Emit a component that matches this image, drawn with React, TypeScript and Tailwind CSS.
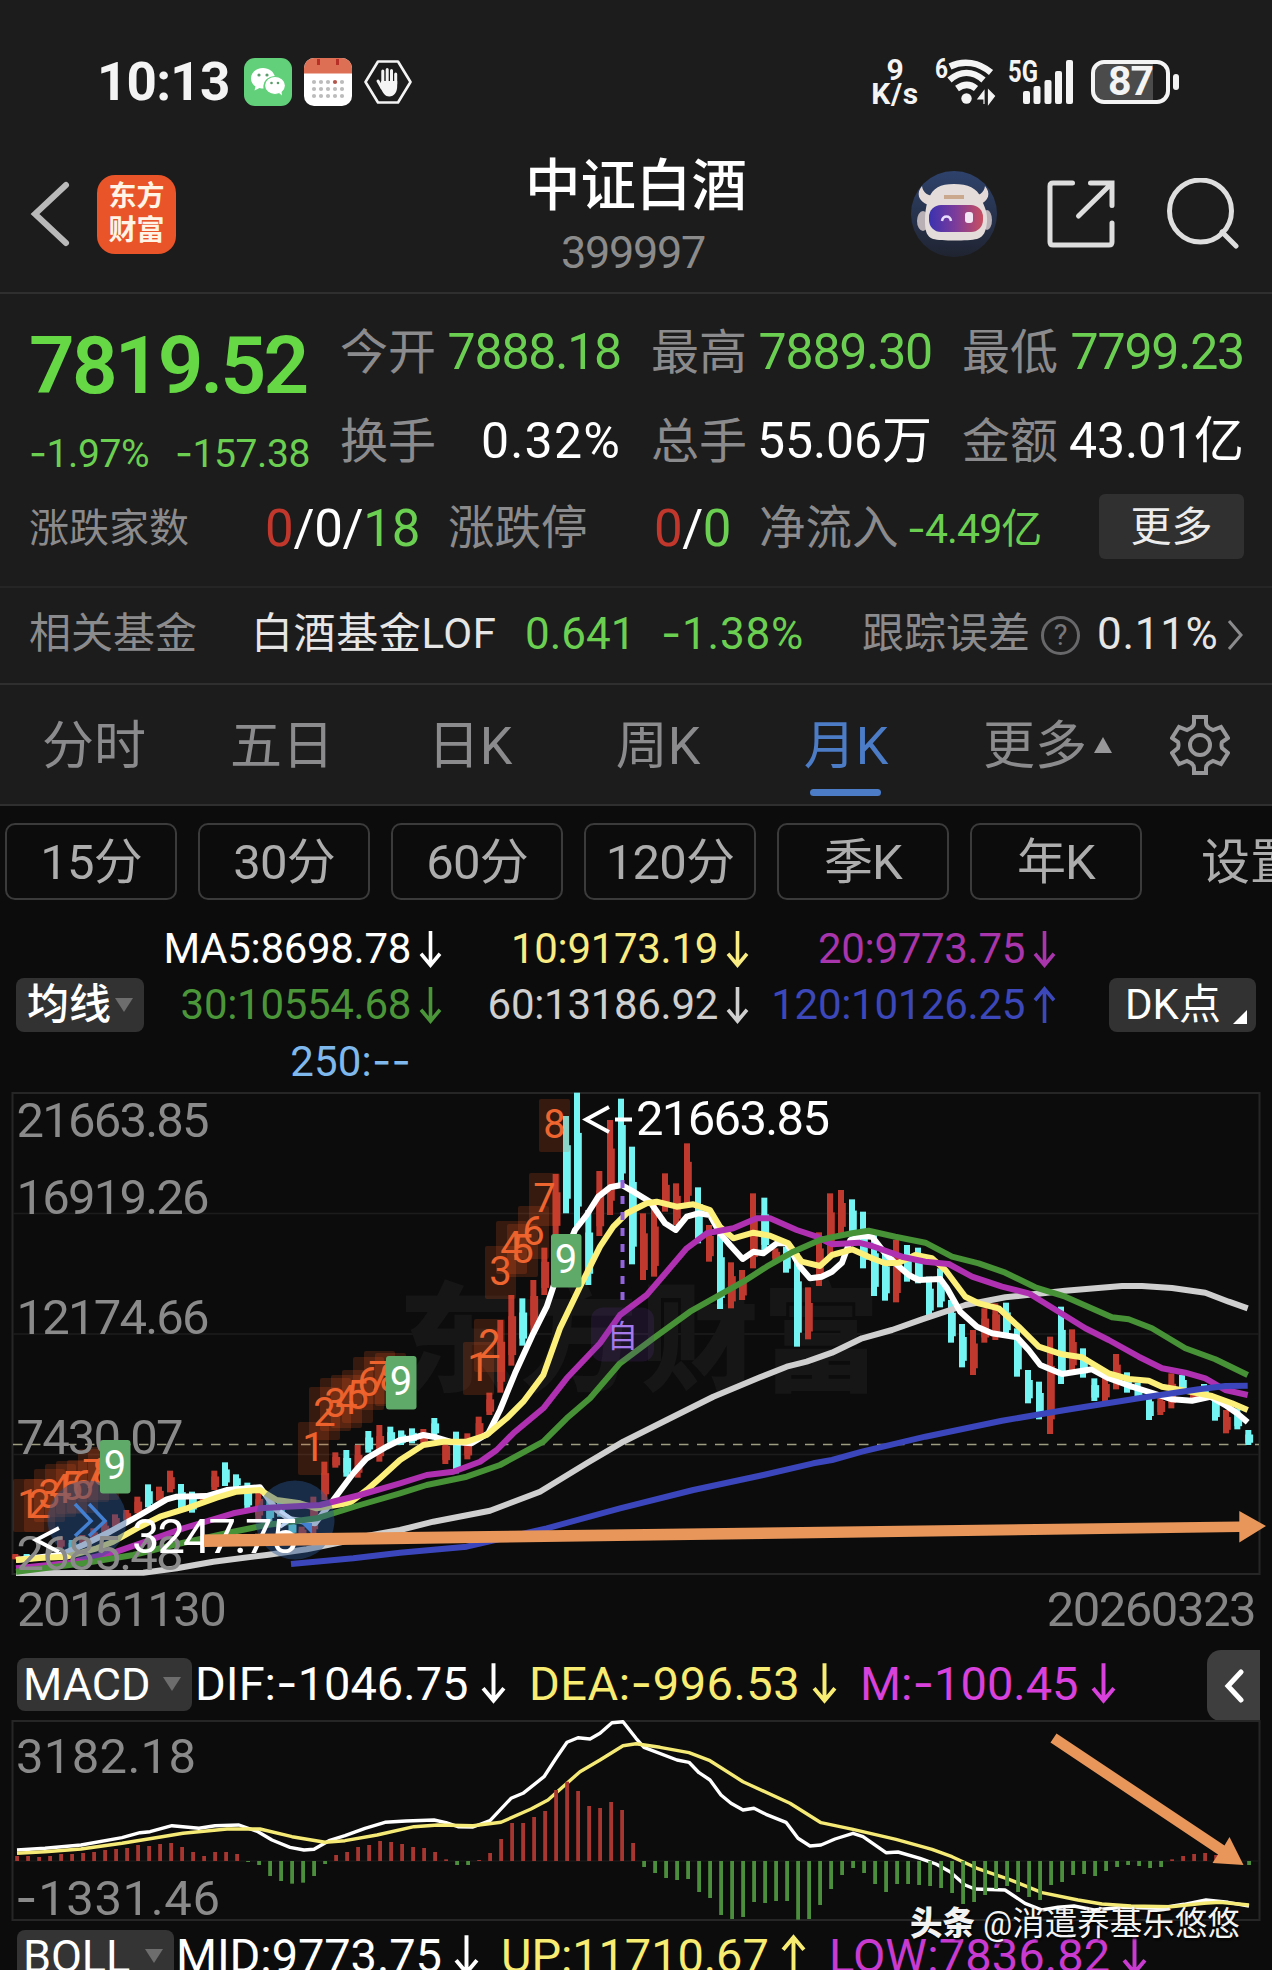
import { ReactNode } from "react";

type Point = [number, number];
type Section = { x: number; points: Point[] };
type Candle = [number, number, number, "r" | "c"];

const RED = "#c0392f";
const CYAN = "#74f4f2";

// Chart geometry is stored in thirds of a pixel, section by section
const SECTION_TOP = 1080;

const toPath = (sections: Section[]) =>
  sections
    .flatMap((s) => s.points.map(([x, y]) => `${(s.x + x / 3).toFixed(1)},${(SECTION_TOP + y / 3).toFixed(1)}`))
    .join(" ");

const movingAverages: { color: string; sections: Section[] }[] = [
  {
    color: "#cfcfcf",
    sections: [
      { x: 0, points: [[48, 1480], [430, 1478], [530, 1465], [640, 1445], [800, 1425], [920, 1408], [1030, 1385], [1100, 1368]] },
      { x: 400, points: [[0, 1350], [100, 1325], [270, 1292], [420, 1235], [560, 1150], [670, 1085], [800, 1020], [940, 950], [1080, 892], [1160, 860], [1220, 845]] },
      { x: 832, points: [[0, 818], [90, 775], [180, 750], [270, 718], [400, 675], [520, 652], [700, 632], [870, 618], [930, 618], [1020, 624], [1120, 638], [1190, 665], [1247, 685]] },
    ],
  },
  {
    color: "#ffffff",
    sections: [
      { x: 0, points: [[48, 1440], [180, 1425], [250, 1395], [330, 1355], [420, 1305], [500, 1258], [530, 1250], [620, 1248], [680, 1230], [780, 1222], [830, 1290], [870, 1318], [945, 1330], [1000, 1260], [1060, 1180], [1100, 1135], [1160, 1100]] },
      { x: 400, points: [[0, 1080], [35, 1075], [70, 1065], [100, 1070], [150, 1085], [215, 1090], [265, 1060], [300, 990], [345, 880], [400, 760], [440, 680], [480, 560], [525, 450], [560, 405], [595, 350], [630, 322], [665, 315], [700, 335], [750, 365], [795, 430], [827, 450], [860, 410], [895, 400], [930, 405], [960, 460], [990, 495], [1028, 537], [1060, 515], [1090, 520], [1130, 490], [1160, 490], [1200, 560], [1230, 595], [1265, 590]] },
      { x: 832, points: [[0, 575], [30, 548], [55, 480], [90, 468], [120, 470], [155, 515], [190, 550], [230, 585], [260, 600], [325, 597], [345, 625], [385, 695], [435, 740], [480, 760], [555, 772], [590, 810], [625, 855], [690, 882], [780, 868], [830, 895], [900, 920], [980, 945], [1020, 958], [1080, 962], [1135, 950], [1180, 975], [1215, 1000], [1247, 1027]] },
    ],
  },
  {
    color: "#fdf07a",
    sections: [
      { x: 0, points: [[48, 1440], [120, 1434], [200, 1430], [290, 1405], [340, 1385], [420, 1340], [480, 1310], [560, 1285], [650, 1253], [710, 1235], [780, 1230], [830, 1260], [900, 1270], [950, 1285], [1050, 1268], [1100, 1230], [1140, 1195]] },
      { x: 400, points: [[0, 1140], [70, 1095], [130, 1085], [200, 1085], [260, 1065], [320, 1015], [370, 965], [430, 885], [480, 745], [540, 620], [600, 500], [640, 440], [680, 400], [740, 370], [770, 365], [830, 380], [880, 373], [930, 390], [960, 440], [1000, 475], [1060, 458], [1110, 467], [1165, 490], [1205, 545], [1260, 558]] },
      { x: 832, points: [[0, 525], [60, 508], [120, 535], [160, 550], [200, 548], [250, 525], [300, 535], [340, 570], [400, 650], [440, 670], [500, 685], [560, 740], [620, 800], [690, 823], [750, 832], [830, 880], [890, 897], [950, 902], [990, 920], [1060, 932], [1140, 948], [1200, 970], [1247, 990]] },
    ],
  },
  {
    color: "#b030b2",
    sections: [
      { x: 0, points: [[48, 1465], [200, 1450], [350, 1415], [450, 1380], [550, 1345], [700, 1300], [780, 1285], [860, 1280], [960, 1275], [1080, 1245]] },
      { x: 400, points: [[0, 1210], [80, 1185], [160, 1175], [240, 1145], [290, 1110], [340, 1060], [430, 985], [500, 895], [600, 790], [660, 705], [740, 645], [800, 575], [860, 505], [920, 460], [1000, 445], [1070, 415], [1110, 415], [1190, 450], [1250, 470]] },
      { x: 832, points: [[0, 493], [80, 488], [120, 498], [210, 530], [280, 545], [350, 552], [420, 590], [510, 620], [590, 640], [680, 695], [760, 745], [830, 780], [920, 830], [990, 865], [1060, 878], [1120, 895], [1180, 930], [1247, 945]] },
    ],
  },
  {
    color: "#479136",
    sections: [
      { x: 0, points: [[48, 1475], [250, 1450], [400, 1425], [520, 1395], [700, 1355], [800, 1335], [950, 1315], [1080, 1275]] },
      { x: 400, points: [[0, 1240], [80, 1215], [200, 1190], [300, 1155], [430, 1085], [500, 1015], [570, 955], [660, 850], [760, 775], [870, 695], [950, 650], [1030, 605], [1100, 560], [1180, 515], [1260, 480]] },
      { x: 832, points: [[0, 472], [60, 460], [110, 452], [190, 470], [280, 488], [360, 530], [440, 550], [520, 578], [610, 622], [700, 650], [840, 712], [890, 718], [960, 745], [1060, 805], [1150, 838], [1247, 885]] },
    ],
  },
  {
    color: "#3b46bd",
    sections: [
      { x: 0, points: [[873, 1452], [1060, 1435]] },
      { x: 400, points: [[0, 1418], [200, 1400], [440, 1345], [660, 1285], [880, 1230], [1090, 1185], [1240, 1150]] },
      { x: 832, points: [[0, 1140], [90, 1115], [280, 1070], [510, 1022], [700, 990], [920, 955], [1100, 928], [1180, 918], [1247, 917]] },
    ],
  },
];

const candles: { x: number; items: Candle[] }[] = [
  {
    x: 0,
    items: [
      [46, 1422, 1438, "r"], [80, 1422, 1434, "c"], [180, 1370, 1405, "r"], [215, 1380, 1410, "c"], [247, 1365, 1400, "r"], [280, 1345, 1385, "r"],
      [313, 1325, 1365, "r"], [345, 1303, 1340, "r"], [379, 1290, 1322, "r"], [412, 1250, 1300, "r"], [444, 1213, 1282, "c"], [477, 1220, 1262, "r"],
      [510, 1172, 1237, "r"], [543, 1212, 1293, "c"], [576, 1235, 1298, "c"], [609, 1240, 1262, "r"], [643, 1172, 1230, "r"], [675, 1147, 1218, "c"],
      [708, 1183, 1222, "c"], [742, 1208, 1288, "c"], [775, 1230, 1320, "r"], [808, 1250, 1325, "c"], [840, 1265, 1310, "c"], [875, 1320, 1365, "c"],
      [905, 1340, 1370, "r"], [940, 1250, 1365, "r"], [973, 1145, 1260, "r"], [1006, 1117, 1163, "r"], [1039, 1110, 1190, "c"], [1073, 1095, 1193, "r"],
      [1105, 1053, 1118, "c"], [1138, 1035, 1145, "r"], [1171, 1040, 1095, "c"], [1204, 1052, 1092, "c"],
    ],
  },
  {
    x: 400,
    items: [
      [3, 1052, 1095, "c"], [36, 1045, 1090, "c"], [70, 1047, 1090, "r"], [103, 1014, 1068, "c"], [136, 1075, 1152, "r"], [168, 1055, 1180, "c"],
      [202, 1060, 1138, "r"], [236, 1010, 1075, "r"], [268, 938, 1005, "r"], [301, 720, 938, "r"], [334, 645, 857, "r"], [367, 655, 797, "c"],
      [400, 600, 760, "r"], [433, 503, 645, "r"], [467, 282, 465, "r"], [498, 108, 400, "c"], [531, 38, 440, "c"], [565, 390, 615, "c"],
      [598, 273, 468, "r"], [630, 120, 405, "r"], [663, 56, 320, "c"], [696, 200, 553, "c"], [729, 400, 600, "r"], [762, 375, 590, "r"],
      [795, 280, 395, "r"], [828, 310, 435, "r"], [861, 190, 375, "r"], [894, 322, 490, "c"], [927, 435, 545, "r"], [960, 465, 687, "c"],
      [993, 547, 685, "r"], [1026, 570, 660, "r"], [1059, 340, 565, "r"], [1093, 353, 520, "c"], [1126, 505, 540, "r"], [1158, 500, 578, "c"],
      [1191, 520, 800, "c"], [1224, 622, 778, "r"], [1257, 457, 618, "r"], [1290, 340, 530, "r"],
    ],
  },
  {
    x: 832,
    items: [
      [27, 330, 460, "r"], [60, 358, 470, "c"], [93, 395, 565, "c"], [126, 465, 648, "c"], [159, 515, 662, "c"], [192, 480, 667, "r"],
      [225, 495, 605, "c"], [258, 503, 610, "c"], [291, 590, 710, "c"], [324, 565, 682, "c"], [357, 660, 788, "c"], [390, 732, 862, "c"],
      [423, 750, 885, "r"], [457, 685, 788, "r"], [490, 670, 780, "r"], [522, 668, 765, "c"], [555, 745, 890, "c"], [588, 870, 970, "c"],
      [621, 905, 1018, "c"], [654, 770, 1062, "r"], [687, 680, 912, "c"], [720, 748, 875, "r"], [753, 805, 893, "c"], [787, 895, 963, "c"],
      [819, 890, 963, "r"], [852, 822, 928, "r"], [885, 877, 938, "c"], [917, 908, 955, "c"], [951, 940, 1020, "c"], [985, 945, 1005, "r"],
      [1018, 880, 985, "r"], [1050, 885, 935, "c"], [1083, 930, 968, "r"], [1116, 912, 960, "c"], [1149, 950, 1022, "c"], [1182, 990, 1060, "r"],
      [1216, 985, 1048, "c"], [1249, 1050, 1095, "c"],
    ],
  },
];

// [digit, left, top] of the TD sequence markers
const tdMarks: [string, number, number][] = [
  ["1", 13, 1479], ["2", 24, 1479], ["3", 34, 1469], ["4", 45, 1464], ["5", 56, 1461], ["6", 67, 1460], ["7", 78, 1449], ["8", 88, 1447],
  ["1", 298, 1422], ["2", 309, 1387], ["3", 320, 1378], ["4", 331, 1375], ["5", 342, 1370], ["6", 353, 1357], ["7", 364, 1351], ["8", 375, 1353],
  ["1", 463, 1342], ["2", 474, 1319], ["3", 485, 1246], ["4", 496, 1221], ["5", 507, 1224], ["6", 518, 1206], ["7", 529, 1173], ["8", 539, 1099],
];

const tdNines: [number, number][] = [[100, 1440], [386, 1356], [551, 1234]];

const priceLabels: [string, number, number][] = [
  ["21663.85", 1137, 193],
  ["16919.26", 1213.5, 193],
  ["12174.66", 1333.5, 193],
  ["7430.07", 1454, 167],
  ["2685.48", 1570, 167],
];

// MACD histogram, thirds of a pixel around the zero line at 873
const macdBars = [
  858, 858, 861, 858, 852, 852, 849, 846, 840, 837, 834, 825, 828, 822, 819, 831, 846, 858, 846, 846, 852, 876, 885, 918, 933, 941, 938, 918,
  882, 855, 846, 831, 825, 813, 816, 822, 831, 834, 846, 868, 885, 885, 870, 849, 807, 759, 759, 741, 723, 660, 635, 663, 708, 714, 696, 720,
  819, 891, 909, 924, 930, 927, 966, 984, 1035, 1047, 1041, 996, 999, 993, 993, 1049, 1047, 1005, 957, 915, 894, 909, 942, 966, 942, 942, 945,
  948, 954, 969, 1002, 996, 975, 957, 948, 966, 981, 990, 945, 936, 915, 912, 918, 903, 891, 885, 888, 894, 891, 868, 858, 852, 849, 855, 860,
  868, 885,
];

const difLine: Point[] = [
  [17, 840], [45, 835], [81, 825], [122, 803], [140, 788], [150, 785], [172, 767], [199, 775], [215, 767], [239, 765], [258, 785], [272, 810],
  [290, 832], [304, 840], [314, 838], [329, 812], [345, 797], [365, 775], [385, 757], [406, 753], [434, 750], [446, 758], [458, 770], [473, 771],
  [490, 752], [511, 685], [523, 670], [544, 620], [556, 565], [567, 517], [578, 503], [590, 507], [600, 490], [612, 458], [623, 455], [636, 505],
  [644, 532], [677, 570], [689, 577], [699, 608], [710, 630], [721, 675], [731, 700], [743, 720], [754, 715], [766, 733], [786, 757], [798, 805],
  [810, 828], [821, 825], [835, 807], [853, 790], [863, 800], [886, 848], [898, 846], [920, 865], [936, 882], [950, 905], [965, 945], [975, 957],
  [1005, 960], [1025, 1000], [1042, 1020], [1058, 1012], [1074, 1008], [1094, 1020], [1123, 1012], [1159, 1015], [1184, 1003], [1206, 990],
  [1228, 997], [1249, 1008],
];

const deaLine: Point[] = [
  [17, 850], [45, 845], [81, 837], [122, 820], [162, 800], [183, 790], [227, 777], [260, 777], [292, 800], [325, 817], [345, 812], [377, 795],
  [414, 770], [438, 765], [473, 767], [501, 757], [531, 717], [548, 690], [580, 605], [600, 570], [623, 527], [636, 521], [660, 532], [689, 548],
  [710, 572], [743, 635], [790, 700], [821, 758], [853, 778], [896, 808], [932, 838], [952, 860], [977, 895], [1009, 928], [1042, 968],
  [1078, 990], [1102, 1002], [1131, 1008], [1171, 1010], [1204, 1000], [1220, 997], [1249, 1005],
];

const macdPath = (points: Point[]) => points.map(([x, y]) => `${x},${(1570 + y / 3).toFixed(1)}`).join(" ");

// Roboto's hyphen is too short for a minus sign, so it is set in Inter
function Num({ children }: { children: string }) {
  return (
    <span>
      {children.split(/(-)/).map((part, i) => (part === "-" ? <span key={i} className="[font-family:Inter,sans-serif]">-</span> : part))}
    </span>
  );
}

function Arrow({ up = false, tall = false }: { up?: boolean; tall?: boolean }) {
  return (
    <svg
      viewBox="0 0 24 40"
      className={tall ? "ml-3 h-[42px] w-[25px]" : "ml-2 h-[38px] w-[23px]"}
      fill="none"
      stroke="currentColor"
      strokeWidth="3.8"
    >
      <path d={up ? "M12 39V3M2 15L12 3l10 12" : "M12 1v36M2 25l10 12 10-12"} />
    </svg>
  );
}

function StatusBar() {
  return (
    <div className="flex h-[120px] items-center justify-between pt-[43px] pr-[93px] pl-[97px] text-[#f4f4f4]">
      <div className="flex items-center">
        <span className="w-[147px] pt-[2px] text-[53px] leading-none font-bold tracking-[-0.8px]">10:13</span>
        <svg viewBox="0 0 48 48" className="h-12 w-12">
          <rect width="48" height="48" rx="11" fill="#62d07a" />
          <path d="M19 10c-7 0-12 4.700-12 10.500 0 3.400 1.700 6 4.500 8l-1 4 5-2.400c1.400.4 2.500.5 4 .5A10 10 0 0 1 31 19C30 13.800 25 10 19 10z" fill="#fff" />
          <ellipse cx="31" cy="27.500" rx="10.500" ry="9" fill="#fff" stroke="#62d07a" strokeWidth="1.200" />
          <path d="M35 35l3 2.500-.6-5z" fill="#fff" />
          <g fill="#5a9c6a">
            <circle cx="15" cy="17" r="1.600" />
            <circle cx="23" cy="17" r="1.600" />
            <circle cx="27.500" cy="25" r="1.300" />
            <circle cx="34" cy="25" r="1.300" />
          </g>
        </svg>
        <svg viewBox="0 0 48 48" className="ml-3 h-12 w-12">
          <rect width="48" height="48" rx="10" fill="#fff" />
          <path d="M0 15.500V10A10 10 0 0 1 10 0h28a10 10 0 0 1 10 10v5.500z" fill="#dd6f55" />
          <path d="M14.500 1v6M33.500 1v6" stroke="#b82f28" strokeWidth="3" />
          {[24, 31, 38].map((y) =>
            [10, 17, 24, 31, 38].map((x) => (
              <circle key={`${x}-${y}`} cx={x} cy={y} r="2.100" fill={x === 31 && y === 24 ? "#b4564a" : "#bcbcbc"} />
            ))
          )}
        </svg>
        <svg viewBox="0 0 48 48" className="ml-3 h-12 w-12">
          <path d="M14 3.500h20L46.500 24 34 44.500H14L1.500 24z" fill="none" stroke="currentColor" strokeWidth="2.600" strokeLinejoin="round" />
          <g stroke="currentColor" strokeWidth="3" strokeLinecap="round">
            <path d="M18.800 13v12M23.200 11.500v12M27.500 12.500v12M31.700 16v10M14 23l4 7" />
          </g>
          <path d="M17.300 23h15.900v5c0 6-3 10.500-8 10.500-4 0-6-3-8.900-9z" fill="currentColor" />
        </svg>
      </div>

      <div className="flex items-center">
        <div className="flex w-[50px] flex-col items-center text-[30px] leading-[24px] font-bold">
          <span>9</span>
          <span className="tracking-[0.6px]">K/s</span>
        </div>
        <svg viewBox="0 0 64 50" className="ml-[15px] h-[50px] w-16 overflow-visible">
          <text x="0" y="21" fontSize="27" fontWeight="700" fill="currentColor" textLength="13" lengthAdjust="spacingAndGlyphs">6</text>
          <g fill="none" stroke="currentColor" strokeWidth="6.500">
            <path d="M15 9.500c14-7 29-4 41 6" />
            <path d="M14.500 23c11-9.500 23-9.500 34 0" />
            <path d="M22 31.500c7-5 13-5 19 0" />
          </g>
          <circle cx="31.500" cy="41.500" r="5.200" fill="currentColor" />
          <path d="M49 47V34l-6 8h6zM53.500 33v14l6-8z" fill="currentColor" stroke="currentColor" strokeWidth="1.200" />
        </svg>
        <svg viewBox="0 0 68 50" className="ml-2 h-[50px] w-[68px] overflow-visible" fill="currentColor">
          <text x="1" y="25" fontSize="31" fontWeight="700" textLength="30" lengthAdjust="spacingAndGlyphs">5G</text>
          <rect x="16" y="34" width="7" height="13" rx="2" />
          <rect x="26.500" y="29" width="7" height="18" rx="2" />
          <rect x="37.500" y="23" width="7" height="24" rx="2" />
          <rect x="48" y="14" width="7" height="33" rx="2" />
          <rect x="59" y="3" width="7" height="44" rx="2" />
        </svg>
        <div className="ml-4 flex h-11 w-[79px] items-center justify-center rounded-[13px] border-4 border-current bg-linear-to-r from-[#4b4b4b] from-82% to-[#1c1c1c] to-82% text-[41px] leading-none font-bold tracking-[-1px]">
          87
        </div>
        <div className="ml-[3px] h-4 w-1.5 rounded-sm bg-current" />
      </div>
    </div>
  );
}

function Header() {
  return (
    <header className="grid h-[174px] grid-cols-[400px_1fr_400px] items-center border-b-2 border-[#2f2f2f] pt-[16px]">
      <div className="flex items-center pl-[30px]">
        <svg viewBox="0 0 42 68" className="h-[68px] w-[42px]" fill="none" stroke="#b9b9b9" strokeWidth="6" strokeLinecap="round">
          <path d="M36 5L5 34l31 29" />
        </svg>
        <div className="ml-[25px] flex h-[79px] w-[79px] flex-col items-center justify-center rounded-[18px] bg-[#e95428] text-[28px] leading-[34px] font-bold text-[#fff4e6]">
          <span>东方</span>
          <span>财富</span>
        </div>
      </div>
      <div className="flex flex-col items-center pt-[12px]">
        <h1 className="text-[55.5px] leading-[66px] font-medium text-white">中证白酒</h1>
        <span className="pr-[6px] text-[45px] leading-[66px] tracking-[-1.3px] text-[#8b8b8b]">399997</span>
      </div>
      <div className="flex items-center pl-[38px]">
        <svg viewBox="0 0 88 88" className="h-[88px] w-[88px]">
          <defs>
            <linearGradient id="visor" x1="0" x2="1">
              <stop offset="0" stopColor="#3a32b0" />
              <stop offset=".5" stopColor="#7d3c9a" />
              <stop offset="1" stopColor="#c84f60" />
            </linearGradient>
            <linearGradient id="disc" x1="0" x2="0" y1="0" y2="1">
              <stop offset="0" stopColor="#2e426b" />
              <stop offset="1" stopColor="#202431" />
            </linearGradient>
          </defs>
          <circle cx="44" cy="44" r="43" fill="url(#disc)" />
          <path d="M12 16c-6 7-4 15 6 19l8-9c-8 0-13-3-14-10zM75 16c6 7 4 15-6 19l-8-9c8 0 13-3 14-10z" fill="#e4d9d6" />
          <ellipse cx="13" cy="51" rx="6" ry="10" fill="#b9b0b5" />
          <ellipse cx="77" cy="50" rx="5" ry="10" fill="#b9b0b5" />
          <path d="M44 14c14 0 23 4 27 14 3 8 7 14 6 24-1 9-3 15-10 17-9 2-36 2-44 0-6-2-8-8-8-17 0-10 1-17 4-24 4-10 11-14 25-14z" fill="#e3dcda" />
          <path d="M34 27h20" stroke="#c9a88e" strokeWidth="4" />
          <rect x="19" y="35" width="54" height="27" rx="12" fill="url(#visor)" />
          <path d="M32 51c1-6 8-6 9 0" fill="none" stroke="#e8dcff" strokeWidth="2.500" />
          <rect x="55" y="42" width="8" height="11" rx="3" fill="#f2e6f5" />
        </svg>
        <svg viewBox="0 0 68 68" className="ml-[49px] h-[68px] w-[68px]" fill="none" stroke="#dedede" strokeWidth="5" strokeLinecap="round">
          <path d="M25.500 3H6Q3 3 3 6v56q0 3 3 3h56q3 0 3-3V43M43.500 3H65v22.500M64 4L31.500 36" />
        </svg>
        <svg viewBox="0 0 72 72" className="ml-[52px] h-[72px] w-[72px]" fill="none" stroke="#dedede" strokeWidth="5" strokeLinecap="round">
          <circle cx="33.500" cy="33" r="31" />
          <path d="M55 54l14 14" />
        </svg>
      </div>
    </header>
  );
}

function Quote({ label, value, className }: { label: string; value: string; className: string }) {
  return (
    <div className="flex items-center justify-between">
      <span className="-ml-px text-[48px] text-[#8b8b8d]">{label}</span>
      <span className={`text-[50px] ${className}`}>{value}</span>
    </div>
  );
}

function QuotePanel() {
  const green = "text-[#6bd052] tracking-[-1.2px]";
  const white = "text-white tracking-[-0.1px]";
  return (
    <section className="border-b-2 border-[#252526] pt-[14px] pb-[14px] whitespace-nowrap">
      <div className="flex">
        <div className="w-[341px] pl-[29px]">
          <div className="h-[115px] pt-px text-[80px] leading-[115px] font-semibold tracking-[-2.8px] text-[#66d745]">7819.52</div>
          <div className="flex h-[62px] items-center justify-between pr-[31px] text-[39px] tracking-[-0.4px] text-[#6bd052]">
            <Num>-1.97%</Num>
            <Num>-157.38</Num>
          </div>
        </div>
        <div className="grid auto-rows-[89px] grid-cols-[280px_280px_281px] gap-x-[31px]">
          <Quote label="今开" value="7888.18" className={green} />
          <Quote label="最高" value="7889.30" className={green} />
          <Quote label="最低" value="7799.23" className={green} />
          <Quote label="换手" value="0.32%" className="text-white tracking-[1.2px]" />
          <Quote label="总手" value="55.06万" className={white} />
          <Quote label="金额" value="43.01亿" className={white} />
        </div>
      </div>
      <div className="flex h-[86px] items-center pl-[29px] text-[47px] text-[#8b8b8d]">
        <div className="flex w-[391px] items-center justify-between">
          <span className="text-[40px]">涨跌家数</span>
          <span className="text-[51px] tracking-[-0.3px] text-white">
            <span className="text-[#c2372c]">0</span>/0/<span className="text-[#6bd052]">18</span>
          </span>
        </div>
        <div className="ml-[28px] flex w-[283px] items-center justify-between">
          <span className="text-[46.5px]">涨跌停</span>
          <span className="text-[51px] tracking-[-0.5px] text-white">
            <span className="text-[#c2372c]">0</span>/<span className="text-[#6bd052]">0</span>
          </span>
        </div>
        <span className="ml-[28px] w-[148px] text-[46.5px]">净流入</span>
        <span className="w-[192px] text-[41px] tracking-[-0.9px] text-[#6bd052]"><Num>-4.49亿</Num></span>
        <button className="mb-[5px] h-[65px] w-[145px] rounded-md bg-[#303030] text-[41px] leading-[62px] text-[#ececec]">更多</button>
      </div>
    </section>
  );
}

function FundRow() {
  return (
    <section className="flex h-[97px] items-center border-b-2 border-[#2f2f2f] pb-[4px] pl-[29px] text-[42px] whitespace-nowrap text-[#8b8b8d]">
      <span className="w-[222px]">相关基金</span>
      <span className="w-[274px] tracking-[0.6px] text-[#e6e6e6]">白酒基金LOF</span>
      <span className="w-[136px] text-[44px] text-[#6bd052]">0.641</span>
      <span className="w-[201px] text-[44px] tracking-[0.8px] text-[#6bd052]"><Num>-1.38%</Num></span>
      <span className="w-[179px]">跟踪误差</span>
      <span className="mt-[3px] flex h-[39px] w-[39px] items-center justify-center rounded-full border-[3px] border-[#68686a] text-[29px] leading-none text-[#77777a]">?</span>
      <span className="ml-[17px] w-[130px] text-[44px] tracking-[0.7px] text-[#e6e6e6]">0.11%</span>
      <svg viewBox="0 0 16 30" className="mt-[3px] h-[30px] w-4" fill="none" stroke="#8b8b8d" strokeWidth="3">
        <path d="M2 1l12 14L2 29" />
      </svg>
    </section>
  );
}

function Tabs() {
  return (
    <nav className="flex h-[121px] items-center border-b-2 border-[#2f2f2f] text-[52px] leading-none whitespace-nowrap text-[#8b8b8d]">
      {["分时", "五日", "日K", "周K"].map((tab) => (
        <span key={tab} className="w-[188px] pt-[4px] text-center">{tab}</span>
      ))}
      <span className="relative w-[188px] pt-[4px] text-center text-[#4c7cc6]">
        月K
        <span className="absolute -bottom-[23px] left-[58px] h-[7px] w-[71px] rounded-full bg-[#4c7cc6]" />
      </span>
      <span className="flex w-[188px] items-center justify-center gap-1.5 pt-[4px] pl-7">
        更多
        <svg viewBox="0 0 20 16" className="mb-1 h-4 w-5" fill="#98989a">
          <path d="M10 0l9 16H1z" />
        </svg>
      </span>
      <svg viewBox="0 0 60 60" className="ml-[42px] h-[60px] w-[60px]" fill="none" stroke="#98989a" strokeWidth="4">
        <path d="M24 2h12v6q0 3 3 5l4 2 8-3 7 11-6 4q-1 3 0 6l6 5-7 11-8-3-4 2q-3 2-3 5v5H24v-5q0-3-3-5l-4-2-8 3L2 38l6-5q1-3 0-6l-6-4L9 12l8 3 4-2q3-2 3-5z" />
        <circle cx="30" cy="30" r="10" />
      </svg>
    </nav>
  );
}

function PeriodChips() {
  return (
    <div className="flex h-[113px] gap-[21px] overflow-hidden pt-[17px] pl-[5px] text-[49px] leading-[75px] whitespace-nowrap text-[#adadad]">
      {["15分", "30分", "60分", "120分", "季K", "年K"].map((chip) => (
        <span key={chip} className="h-[77px] w-[172px] shrink-0 rounded-[10px] border-2 border-[#3b3b3b] text-center tracking-[-0.8px]">
          {chip}
        </span>
      ))}
      <span className="shrink-0 pt-[2px] pl-[38px]">设置</span>
    </div>
  );
}

function MaCell({ color, children }: { color: string; children: ReactNode }) {
  return <div className={`flex items-center justify-end ${color}`}>{children}</div>;
}

function MaLegend() {
  return (
    <div className="flex h-[171px] items-center pl-4 text-[42px] leading-none whitespace-nowrap">
      <button className="flex h-[54px] w-32 items-center rounded-lg bg-[#323232] pl-[11px] text-[42px] font-medium text-white">
        均线
        <svg viewBox="0 0 18 14" className="ml-1 h-3.5 w-[18px]" fill="#6d6d6d">
          <path d="M0 0h18l-9 14z" />
        </svg>
      </button>
      <div className="grid auto-rows-[56.5px] grid-cols-[298px_307px_307px] pt-[1px] tracking-[-0.3px]">
        <MaCell color="text-white">MA5:8698.78<Arrow /></MaCell>
        <MaCell color="text-[#f9ec83]">10:9173.19<Arrow /></MaCell>
        <MaCell color="text-[#a935ad]">20:9773.75<Arrow /></MaCell>
        <MaCell color="text-[#4b9639]">30:10554.68<Arrow /></MaCell>
        <MaCell color="text-[#cfcfcf]">60:13186.92<Arrow /></MaCell>
        <MaCell color="text-[#3c48ba]">120:10126.25<Arrow up /></MaCell>
        <MaCell color="text-[#7fb8ec] pr-[31px] tracking-[0.2px]"><Num>250:--</Num></MaCell>
      </div>
      <button className="ml-[53px] flex h-[54px] w-[147px] items-end rounded-lg bg-[#323232] pl-[16px] text-[42px] leading-[54px] text-white">
        DK点
        <svg viewBox="0 0 14 14" className="mb-2 ml-3 h-3.5 w-3.5" fill="#fff">
          <path d="M14 0v14H0z" />
        </svg>
      </button>
    </div>
  );
}

function PriceChart() {
  return (
    <svg viewBox="0 1090 1272 486" className="block h-[486px] w-full">
      <rect x="12.500" y="1093" width="1247" height="481" fill="none" stroke="#262626" strokeWidth="2" />
      <path d="M13 1213.500h1246M13 1334h1246M13 1454.500h1246" stroke="#1c1c1c" strokeWidth="1.500" />
      <text x="398" y="1382" fontSize="118" fontWeight="900" fill="#161616" textLength="482">东方财富</text>
      <path d="M13 1444.500h1246" stroke="#9b9c80" strokeWidth="1.300" strokeDasharray="9.500 8.500" />

      {candles.map((section) =>
        section.items.map(([x, top, bottom, tone]) => {
          const left = section.x + x / 3 - 3;
          const y = SECTION_TOP + top / 3;
          const height = (bottom - top) / 3;
          return (
            <g key={left} fill={tone === "r" ? RED : CYAN}>
              <rect x={left} y={y} width="6" height={height} />
              <rect x={left} y={y + height * 0.3} width="7.800" height={height * 0.55} />
            </g>
          );
        })
      )}

      {tdMarks.map(([digit, x, y]) => (
        <g key={`${x}-${y}`}>
          <rect x={x} y={y} width="31" height="53" rx="2" fill="#e2571c" opacity=".2" />
          <text x={x + 15.500} y={y + 39} fontSize="40" textAnchor="middle" fill="#ef6530">{digit}</text>
        </g>
      ))}

      {movingAverages.map((ma) => (
        <polyline key={ma.color} points={toPath(ma.sections)} fill="none" stroke={ma.color} strokeWidth="6" strokeLinejoin="round" />
      ))}

      <circle cx="87" cy="1520" r="39.500" fill="#2a5590" opacity=".45" />
      <circle cx="295" cy="1520" r="39.500" fill="#2a5590" opacity=".45" />
      <g fill="none" stroke="#4380d2" strokeWidth="3.500">
        <path d="M75 1504l16 17-16 15M89 1504l16 17-16 15" />
      </g>
      <path d="M280 1511l12 8-12 8" fill="none" stroke="#bcd2f2" strokeWidth="3.500" />
      <path d="M301 1523h11v11z" fill="#4380d2" />

      <g fill="#8a8a8a" fontSize="49">
        {priceLabels.map(([label, y, width]) => (
          <text key={label} x="16.500" y={y} textLength={width}>{label}</text>
        ))}
      </g>

      {tdNines.map(([x, y]) => (
        <g key={x}>
          <rect x={x} y={y} width="30.500" height="53.500" rx="3" fill="#5faa69" />
          <text x={x + 15} y={y + 39} fontSize="40" textAnchor="middle" fill="#fff">9</text>
        </g>
      ))}

      <path d="M622.500 1180v120" stroke="#9263dc" strokeWidth="4" strokeDasharray="8 8" />
      <rect x="591" y="1307.500" width="63" height="54" rx="12" fill="#6a31a0" opacity=".18" />
      <text x="607" y="1347" fontSize="31" fill="#a679ea">自</text>

      <g fill="none" stroke="#fff" strokeWidth="3.800">
        <path d="M609 1107l-23 12.500 23 12.500M615 1119.500h17" />
        <path d="M59 1528l-23 12 23 12" />
      </g>
      <g fill="#fff" fontSize="49">
        <text x="636" y="1135" textLength="194">21663.85</text>
        <text x="132" y="1553" textLength="166">3247.75</text>
      </g>

      <path d="M204 1534.500L1239.300 1521.500V1511L1266 1526l-26.700 16.500V1532L204 1547z" fill="#e8965a" />
    </svg>
  );
}

function IndicatorButton({ name, width }: { name: string; width: string }) {
  return (
    <button className={`mt-0.5 flex h-[53px] items-center justify-between rounded-lg bg-[#343434] pr-[11px] pl-[6px] text-[45px] leading-none text-white ${width}`}>
      {name}
      <svg viewBox="0 0 18 14" className="h-3.5 w-[18px]" fill="#6d6d6d">
        <path d="M0 0h18l-9 14z" />
      </svg>
    </button>
  );
}

function MacdChart() {
  return (
    <svg viewBox="0 1720 1272 202" className="block h-[202px] w-full">
      <rect x="12.500" y="1721" width="1247" height="199" fill="none" stroke="#262626" strokeWidth="2" />
      <path d="M13 1861h1246" stroke="#1c1c1c" strokeWidth="1" />
      <g fill="#8a8a8a" fontSize="49">
        <text x="16" y="1773" textLength="180">3182.18</text>
        <text x="15" y="1915" textLength="205">
          <tspan fontFamily="Inter">-</tspan>1331.46
        </text>
      </g>
      <polyline points={macdPath(difLine)} fill="none" stroke="#fff" strokeWidth="3.400" strokeLinejoin="round" />
      <polyline points={macdPath(deaLine)} fill="none" stroke="#f6ea76" strokeWidth="3.400" strokeLinejoin="round" />
      {macdBars.map((value, i) => (
        <rect
          key={i}
          x={15.200 + i * 11}
          y={Math.min(1861, 1570 + value / 3)}
          width="3.800"
          height={Math.max(1, Math.abs(873 - value) / 3)}
          fill={value < 873 ? "#a83630" : "#4b8f3c"}
        />
      ))}
      <path d="M1056.500 1733.500l-6 9L1218 1854.500l-5.500 8.500 31 2-14-28-5 8.500z" fill="#e8965a" />
    </svg>
  );
}

export default function App() {
  return (
    <div className="relative h-[1970px] w-[1272px] overflow-hidden bg-[#0c0c0c] [font-family:Roboto,'Noto_Sans_CJK_SC',sans-serif]">
      <div className="bg-[#1c1c1c]">
        <StatusBar />
        <Header />
        <QuotePanel />
        <FundRow />
        <Tabs />
      </div>
      <PeriodChips />
      <MaLegend />
      <PriceChart />

      <div className="flex h-[74px] justify-between pr-[17px] pl-[17px] text-[49px] leading-[68px] tracking-[-1.5px] text-[#858585]">
        <span>20161130</span>
        <span>20260323</span>
      </div>

      <div className="flex h-[70px] items-center pb-1 pl-[17px] text-[47px] leading-none whitespace-nowrap">
        <IndicatorButton name="MACD" width="w-[175px]" />
        <span className="flex w-[335px] items-center pl-[3px] text-white"><Num>DIF:-1046.75</Num><Arrow tall /></span>
        <span className="flex w-[330px] items-center pl-0.5 tracking-[0.5px] text-[#f9ec72]"><Num>DEA:-996.53</Num><Arrow tall /></span>
        <span className="flex w-[350px] items-center pl-[3px] text-[#d941dc]"><Num>M:-100.45</Num><Arrow tall /></span>
        <button className="flex h-[71px] w-[53px] items-center justify-center self-start rounded-l-[14px] bg-[#3e3e3e]">
          <svg viewBox="0 0 20 34" className="h-[34px] w-5" fill="none" stroke="#fff" strokeWidth="5" strokeLinecap="round">
            <path d="M17 3L4 17l13 14" />
          </svg>
        </button>
      </div>

      <MacdChart />

      <div className="flex h-[70px] items-center pb-1 pl-[17px] text-[47px] leading-none tracking-[-0.1px] whitespace-nowrap">
        <IndicatorButton name="BOLL" width="w-[157px]" />
        <span className="flex w-[325px] items-center pl-0.5 text-white">MID:9773.75<Arrow tall /></span>
        <span className="flex w-[328px] items-center pl-0.5 text-[#f9ec72]">UP:11710.67<Arrow tall up /></span>
        <span className="flex items-center pl-0.5 tracking-[0.1px] text-[#c93bd0]">LOW:7836.82<Arrow tall /></span>
      </div>

      {/* author watermark */}
      <div className="absolute top-[1904px] left-[910px] flex gap-2 text-[32.5px] leading-[40px] whitespace-nowrap text-[#f2f2f2] [text-shadow:1px_2px_2px_#000]">
        <span className="font-black">头条</span>
        <span>@消遣养基乐悠悠</span>
      </div>
    </div>
  );
}
